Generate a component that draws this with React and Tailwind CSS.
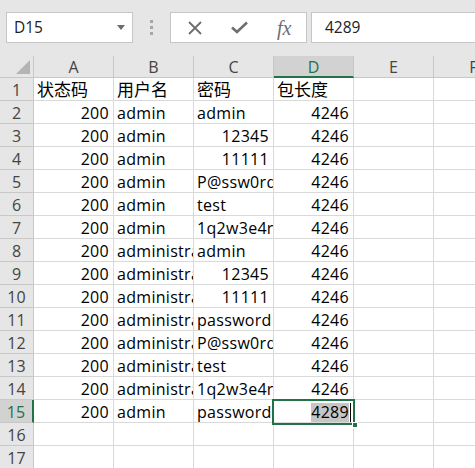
import React from "react";

const COLS = ["A", "B", "C", "D", "E", "F"];

const DATA = [
  ["状态码", "用户名", "密码", "包长度"],
  [200, "admin", "admin", 4246],
  [200, "admin", 12345, 4246],
  [200, "admin", 11111, 4246],
  [200, "admin", "P@ssw0rd", 4246],
  [200, "admin", "test", 4246],
  [200, "admin", "1q2w3e4r", 4246],
  [200, "administrator", "admin", 4246],
  [200, "administrator", 12345, 4246],
  [200, "administrator", 11111, 4246],
  [200, "administrator", "password", 4246],
  [200, "administrator", "P@ssw0rd", 4246],
  [200, "administrator", "test", 4246],
  [200, "administrator", "1q2w3e4r", 4246],
  [200, "admin", "password", 4289],
];

function Cell({ value, active }) {
  const isNum = typeof value === "number";
  const isCjk = typeof value === "string" && /[\u4e00-\u9fff]/.test(value);
  return (
    <div
      className={`w-[80px] h-[23px] shrink-0 border-r border-b border-[#d9d9d9] overflow-hidden whitespace-nowrap px-[3px] leading-[24px] tracking-[0.3px] text-black ${
        isNum ? "text-right pr-[4px]" : "text-left"
      }`}
    >
      {active ? (
        <span className="relative bg-[#c6c6c6] inline-block leading-[19px] mt-[2px]">
          {value}
          <span className="absolute right-[-2px] top-0 w-px h-[19px] bg-black" />
        </span>
      ) : isCjk ? (
        <span className="text-[17px] leading-[22px] tracking-normal">{value}</span>
      ) : (
        value
      )}
    </div>
  );
}

export default function App() {
  const rows = [];
  for (let r = 1; r <= 17; r++) rows.push(r);

  return (
    <div
      className="w-[475px] h-[468px] overflow-hidden bg-white text-[16px]"
      style={{ fontFamily: '"Open Sans", "Noto Sans CJK SC", sans-serif' }}
    >
      {/* formula bar */}
      <div className="h-[56px] bg-[#e6e6e6] flex items-start pt-[12px] pl-[6px]">
        <div className="w-[127px] h-[31px] bg-white border border-[#c6c6c6] flex items-center justify-between pl-[7px] pr-[7px] text-[#222] text-[15.5px]">
          <span>D15</span>
          <svg width="8" height="5" viewBox="0 0 8 5"><path d="M0 0h8L4 5z" fill="#6b6b6b" /></svg>
        </div>
        <div className="w-[37px] h-[31px] flex flex-col items-center justify-center gap-[3px]">
          <div className="w-[3px] h-[3px] bg-[#a6a6a6]" />
          <div className="w-[3px] h-[3px] bg-[#a6a6a6]" />
          <div className="w-[3px] h-[3px] bg-[#a6a6a6]" />
        </div>
        <div className="w-[137px] h-[31px] bg-white border border-[#c6c6c6] flex items-center">
          <div className="w-[46px] flex justify-center pl-[2px]">
            <svg width="14" height="14" viewBox="0 0 14 14"><path d="M1 1L13 13M13 1L1 13" stroke="#6e6e6e" strokeWidth="1.8" /></svg>
          </div>
          <div className="w-[46px] flex justify-center">
            <svg width="17" height="13" viewBox="0 0 17 13"><path d="M1 6.5L6 11L16 1.5" stroke="#6e6e6e" strokeWidth="2.6" fill="none" /></svg>
          </div>
          <div className="w-[44px] flex justify-center text-[#6e6e6e] italic text-[20px] leading-none" style={{ fontFamily: '"Liberation Serif", serif' }}>
            fx
          </div>
        </div>
        <div className="ml-[4px] flex-1 h-[31px] bg-white border border-[#c6c6c6] border-r-0 flex items-center pl-[13px] text-[#222] text-[15.5px]">
          4289
        </div>
      </div>

      {/* grid */}
      <div className="relative">
        <div className="flex h-[22px] bg-[#e6e6e6] text-[#444] text-[16px]">
          <div className="w-[34px] shrink-0 border-r border-b border-[#c8c8c8] relative">
            <svg className="absolute right-[3px] bottom-[3px]" width="14" height="14" viewBox="0 0 14 14"><path d="M14 0V14H0z" fill="#b4b4b4" /></svg>
          </div>
          {COLS.map((c) => (
            <div
              key={c}
              className={`w-[80px] shrink-0 border-r flex items-center justify-center leading-[22px] pt-[1px] ${
                c === "D"
                  ? "bg-[#d2d2d2] text-[#217346] border-b-2 border-b-[#217346] border-r-[#c8c8c8]"
                  : "border-b border-[#c8c8c8]"
              }`}
            >
              {c}
            </div>
          ))}
        </div>
        {rows.map((r) => {
          const data = DATA[r - 1] || [];
          return (
            <div key={r} className="flex h-[23px]">
              <div
                className={`w-[34px] shrink-0 border-b border-[#c8c8c8] text-center leading-[24px] text-[16px] ${
                  r === 15
                    ? "bg-[#d2d2d2] text-[#217346] border-r-2 border-r-[#217346]"
                    : "bg-[#e6e6e6] text-[#444] border-r"
                }`}
              >
                {r}
              </div>
              {COLS.map((c, i) => (
                <Cell key={c} value={data[i]} active={r === 15 && c === "D"} />
              ))}
            </div>
          );
        })}

        {/* active cell border */}
        <div className="absolute left-[272px] top-[343px] w-[83px] h-[26px] border-2 border-[#217346] pointer-events-none">
          <div className="absolute right-[-5px] bottom-[-5px] w-[6px] h-[6px] bg-[#217346] border border-white" />
        </div>
      </div>
    </div>
  );
}
